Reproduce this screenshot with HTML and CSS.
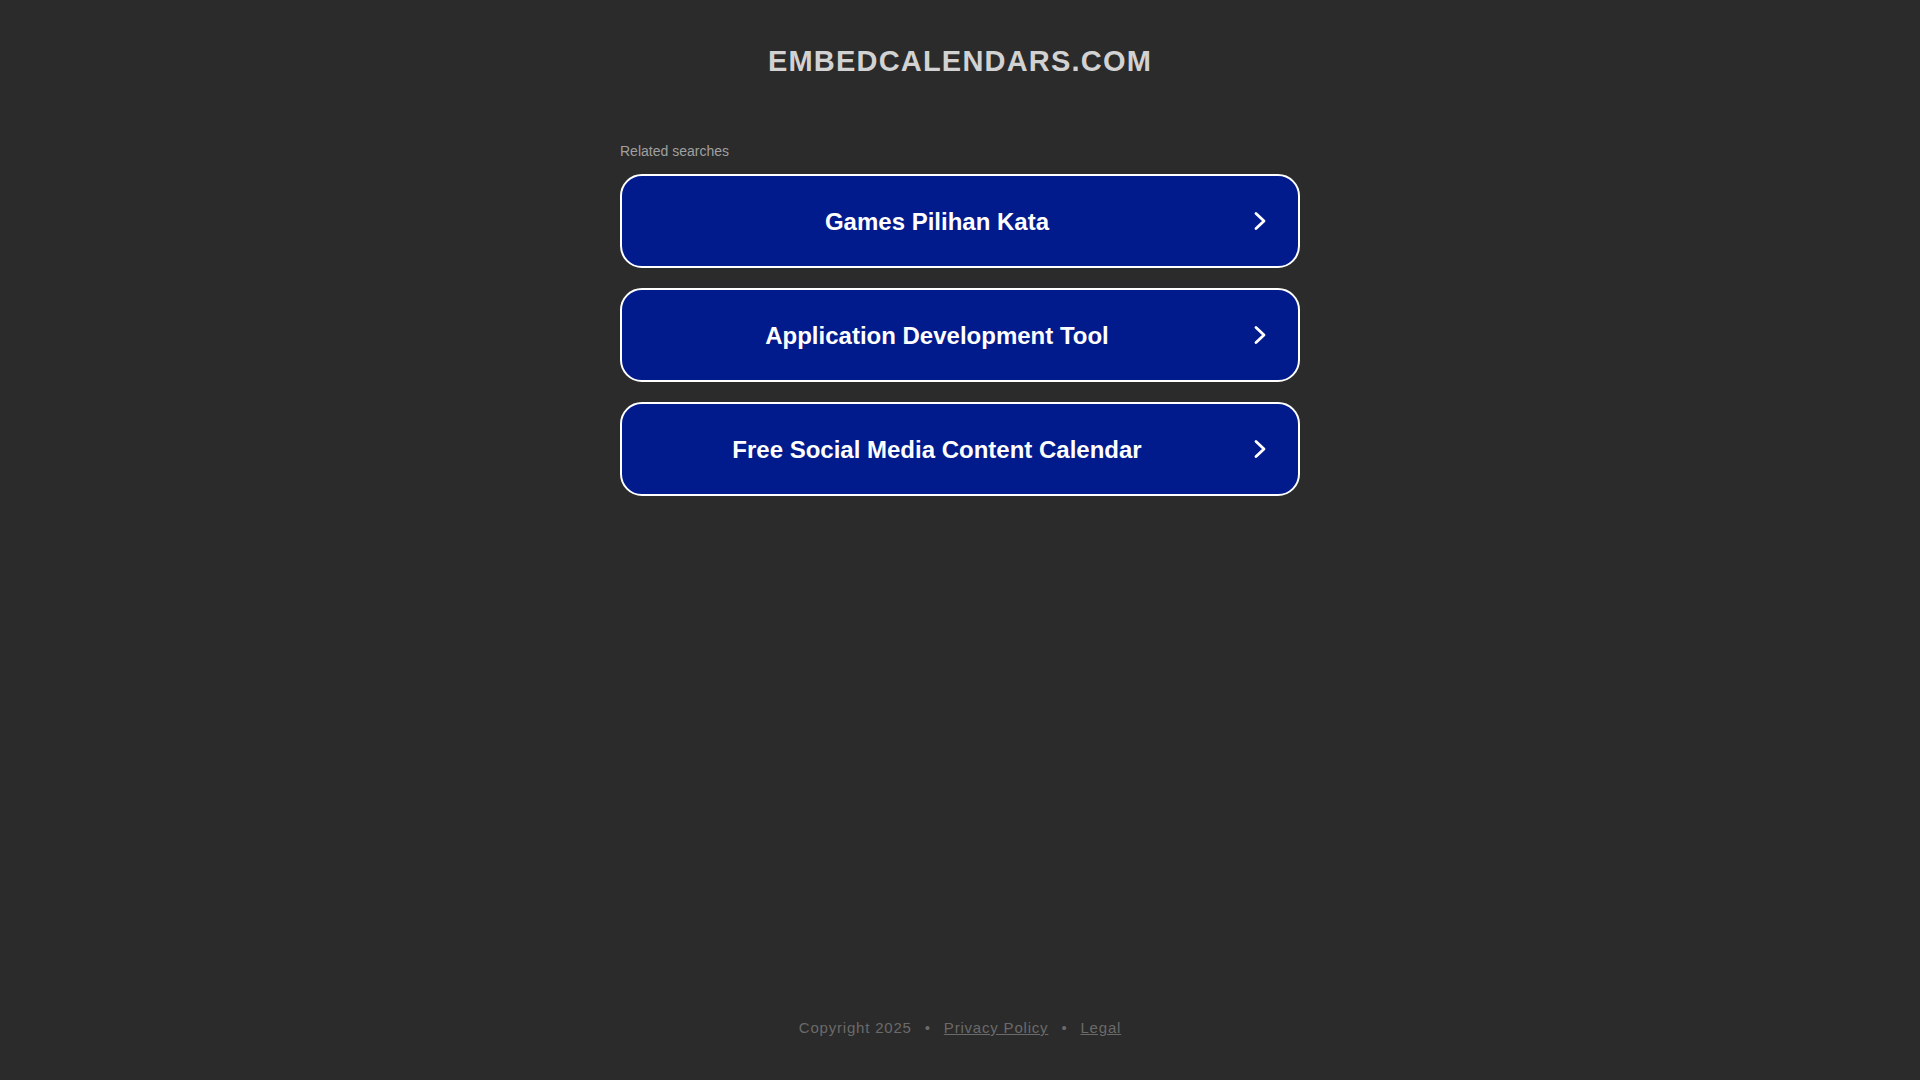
FILE: index.html
```html
<!DOCTYPE html>
<html lang="en">
<head>
<meta charset="utf-8">
<title>embedcalendars.com</title>
<link rel="stylesheet" href="styles.css">
</head>
<body>
<div class="page">
  <header class="header">
    <h1 class="domain">EMBEDCALENDARS.COM</h1>
  </header>
  <main class="content">
    <div class="related">Related searches</div>
    <a class="search-btn" href="#">
      <span class="search-text">Games Pilihan Kata</span>
      <svg class="chev" width="12" height="20" viewBox="0 0 12 20"><polyline points="2,2.5 10,10 2,17.5" fill="none" stroke="#ffffff" stroke-width="2.8" stroke-linecap="round" stroke-linejoin="round"/></svg>
    </a>
    <a class="search-btn" href="#">
      <span class="search-text">Application Development Tool</span>
      <svg class="chev" width="12" height="20" viewBox="0 0 12 20"><polyline points="2,2.5 10,10 2,17.5" fill="none" stroke="#ffffff" stroke-width="2.8" stroke-linecap="round" stroke-linejoin="round"/></svg>
    </a>
    <a class="search-btn" href="#">
      <span class="search-text">Free Social Media Content Calendar</span>
      <svg class="chev" width="12" height="20" viewBox="0 0 12 20"><polyline points="2,2.5 10,10 2,17.5" fill="none" stroke="#ffffff" stroke-width="2.8" stroke-linecap="round" stroke-linejoin="round"/></svg>
    </a>
  </main>
  <footer class="footer">
    <span>Copyright 2025</span><span class="dot">•</span><a href="#" class="flink">Privacy Policy</a><span class="dot">•</span><a href="#" class="flink">Legal</a>
  </footer>
</div>
</body>
</html>
```

FILE: styles.css
```css
html, body {
  margin: 0;
  padding: 0;
  background: #2b2b2b;
}
body {
  font-family: "Liberation Sans", Arial, sans-serif;
}
.page {
  min-height: 100vh;
  display: flex;
  flex-direction: column;
}
.header {
  padding-top: 44px;
  text-align: center;
}
.domain {
  margin: 0;
  font-size: 29px;
  line-height: 34px;
  font-weight: bold;
  letter-spacing: 1.2px;
  color: #d2d2d2;
}
.content {
  width: 680px;
  margin: 65px auto 0;
}
.related {
  font-size: 14px;
  line-height: 16px;
  color: #a0a0a0;
  margin-bottom: 15px;
}
.search-btn {
  display: flex;
  align-items: center;
  box-sizing: border-box;
  height: 94px;
  margin-bottom: 20px;
  border: 2px solid #ffffff;
  border-radius: 22px;
  background: #011a8c;
  color: #ffffff;
  text-decoration: none;
  padding-right: 32px;
}
.search-text {
  flex: 1;
  text-align: center;
  font-size: 24px;
  font-weight: bold;
  line-height: 28px;
  padding-top: 2px;
}
.chev {
  display: block;
  margin-left: 2px;
}
.footer {
  margin-top: auto;
  padding-bottom: 43px;
  text-align: center;
  font-size: 15px;
  line-height: 18px;
  letter-spacing: 0.8px;
  color: #6a6a6a;
}
.dot {
  margin: 0 13px;
}
.flink {
  color: #6a6a6a;
  text-decoration: underline;
}
```
